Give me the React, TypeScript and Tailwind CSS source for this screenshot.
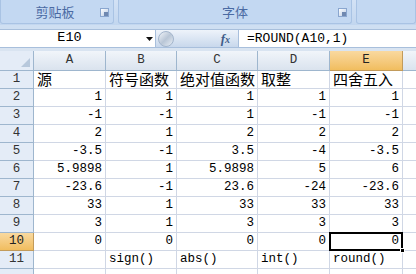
import React from 'react';

const mono = { fontFamily: '"Liberation Mono", "Noto Sans CJK SC", monospace' };
const cjk = { fontFamily: '"Noto Sans CJK SC", sans-serif' };

const cols = ['A', 'B', 'C', 'D', 'E'];
const widths = ['w-[34px]', 'w-[72px]', 'w-[71px]', 'w-[81px]', 'w-[72px]', 'w-[73px]'];

const titles = ['源', '符号函数', '绝对值函数', '取整', '四舍五入'];
const rows = [
  ['1', '1', '1', '1', '1'],
  ['-1', '-1', '1', '-1', '-1'],
  ['2', '1', '2', '2', '2'],
  ['-3.5', '-1', '3.5', '-4', '-3.5'],
  ['5.9898', '1', '5.9898', '5', '6'],
  ['-23.6', '-1', '23.6', '-24', '-23.6'],
  ['33', '1', '33', '33', '33'],
  ['3', '1', '3', '3', '3'],
  ['0', '0', '0', '0', '0'],
];
const fns = ['', 'sign()', 'abs()', 'int()', 'round()'];

function Launcher() {
  return (
    <div className="w-[9px] h-[9px] border border-[#8aa6cf] bg-gradient-to-br from-white to-[#b9cbe4] flex items-end justify-end">
      <div className="w-[4px] h-[4px] bg-[#6f88b0]" />
    </div>
  );
}

function RowHeader({ n, active }: { n?: number; active?: boolean }) {
  return (
    <div
      className={`${widths[0]} shrink-0 h-full flex items-center justify-center border-r border-b text-[12.5px] ${
        active
          ? 'bg-gradient-to-b from-[#f9d99f] to-[#f1bd5e] border-[#c29b5b] text-[#222]'
          : 'bg-[#e4ecf7] border-[#9eb6ce] text-[#333]'
      }`}
      style={mono}
    >
      {n}
    </div>
  );
}

export default function App() {
  return (
    <div className="w-[416px] h-[274px] overflow-hidden bg-[#c9d9ee] select-none">
      {/* ribbon group labels */}
      <div className="h-[25px] flex gap-[4px] bg-gradient-to-b from-[#d3e2f5] to-[#c2d6ef]">
        <div className="w-[114px] h-[24px] rounded-b-[3px] border border-t-0 border-[#a9c3e4] bg-[#c3d8f2] flex items-center relative">
          <span className="flex-1 text-center text-[13px] text-[#4a6aa3] pr-[4px]" style={cjk}>剪贴板</span>
          <div className="absolute right-[4px] top-[8px]"><Launcher /></div>
        </div>
        <div className="w-[234px] h-[24px] rounded-b-[3px] border border-t-0 border-[#a9c3e4] bg-[#c3d8f2] flex items-center relative">
          <span className="flex-1 text-center text-[13px] text-[#4a6aa3]" style={cjk}>字体</span>
          <div className="absolute right-[4px] top-[8px]"><Launcher /></div>
        </div>
        <div className="flex-1 h-[24px] rounded-b-[3px] border border-t-0 border-[#a9c3e4] bg-[#c3d8f2]" />
      </div>
      <div className="h-[4px] bg-[#cfdff2]" />
      {/* formula bar row */}
      <div className="h-[19px] flex border-y border-[#a8bfdc] bg-gradient-to-b from-[#eef3fa] to-[#c8d8ec]">
        <div className="w-[156px] h-full bg-white flex items-center relative border-r border-[#a8bfdc]">
          <span className="flex-1 text-center text-[13.5px] text-black pr-[16px]" style={mono}>E10</span>
          <svg className="absolute left-[146px] top-[7px]" width="7" height="4" viewBox="0 0 7 4">
            <path d="M0 0h7L3.5 4z" fill="#111" />
          </svg>
        </div>
        <div className="w-[19px] h-full flex items-center justify-center">
          <div className="w-[16px] h-[16px] rounded-full bg-gradient-to-br from-[#f2f5fa] via-[#b9c6d6] to-[#e8eef6] border border-[#a3b5cc]" />
        </div>
        <div className="flex-1 flex items-center justify-end pr-[8px]">
          <span className="italic text-[13px] text-[#3f5c88] font-bold" style={{ fontFamily: '"Liberation Serif", serif' }}>
            f<span className="text-[10px]">x</span>
          </span>
        </div>
        <div className="w-[178px] h-full bg-white border-l border-[#a8bfdc] flex items-center pl-[8px]">
          <span className="text-[13px] text-black" style={mono}>=ROUND(A10,1)</span>
        </div>
      </div>
      <div className="h-[3px] bg-[#d9e4f1]" />
      {/* sheet */}
      <div className="bg-white">
        <div className="h-[20px] flex">
          <div className={`${widths[0]} shrink-0 h-full bg-[#e4ecf7] border-r border-b border-[#9eb6ce] relative`}>
            <svg className="absolute right-[3px] bottom-[3px]" width="9" height="9" viewBox="0 0 9 9">
              <path d="M9 0V9H0z" fill="#b7c8dc" />
            </svg>
          </div>
          {cols.map((c, i) => (
            <div
              key={c}
              className={`${widths[i + 1]} shrink-0 h-full flex items-center justify-center border-r border-b text-[12.5px] ${
                c === 'E'
                  ? 'bg-gradient-to-b from-[#f9d99f] to-[#f1bd5e] border-[#c29b5b] text-[#222]'
                  : 'bg-gradient-to-b from-[#f1f5fa] to-[#dae3ee] border-[#9eb6ce] text-[#333]'
              }`}
              style={mono}
            >
              {c}
            </div>
          ))}
          <div className="flex-1 h-full bg-gradient-to-b from-[#f1f5fa] to-[#dae3ee] border-b border-[#9eb6ce]" />
        </div>

        <div className="h-[18px] flex">
          <RowHeader n={1} />
          {titles.map((t, i) => (
            <div
              key={t}
              className={`${widths[i + 1]} shrink-0 h-full border-r border-b border-[#d0d7e5] flex items-center pl-[3px] text-[15px] text-black whitespace-nowrap overflow-visible`}
              style={cjk}
            >
              {t}
            </div>
          ))}
          <div className="flex-1 h-full border-b border-[#d0d7e5]" />
        </div>

        {rows.map((r, ri) => {
          const n = ri + 2;
          return (
            <div key={n} className="h-[18px] flex">
              <RowHeader n={n} active={n === 10} />
              {r.map((v, ci) => (
                <div
                  key={ci}
                  className={`${widths[ci + 1]} shrink-0 h-full border-r border-b border-[#d0d7e5] flex items-center justify-end pr-[3px] text-[12.5px] text-black relative`}
                  style={mono}
                >
                  {v}
                  {n === 10 && ci === 4 && (
                    <>
                      <div className="absolute -left-px -top-px w-[74px] h-[19px] border-2 border-black" />
                      <div className="absolute -right-[3px] -bottom-[3px] w-[5px] h-[5px] bg-black border border-white" />
                    </>
                  )}
                </div>
              ))}
              <div className="flex-1 h-full border-b border-[#d0d7e5]" />
            </div>
          );
        })}

        <div className="h-[18px] flex">
          <RowHeader n={11} />
          {fns.map((f, i) => (
            <div
              key={i}
              className={`${widths[i + 1]} shrink-0 h-full border-r border-b border-[#d0d7e5] flex items-center pl-[3px] text-[12.5px] text-black`}
              style={mono}
            >
              {f}
            </div>
          ))}
          <div className="flex-1 h-full border-b border-[#d0d7e5]" />
        </div>
        <div className="h-[20px] flex">
          <RowHeader />
          {fns.map((_, i) => (
            <div key={i} className={`${widths[i + 1]} shrink-0 h-full border-r border-[#d0d7e5]`} />
          ))}
        </div>
      </div>
    </div>
  );
}
